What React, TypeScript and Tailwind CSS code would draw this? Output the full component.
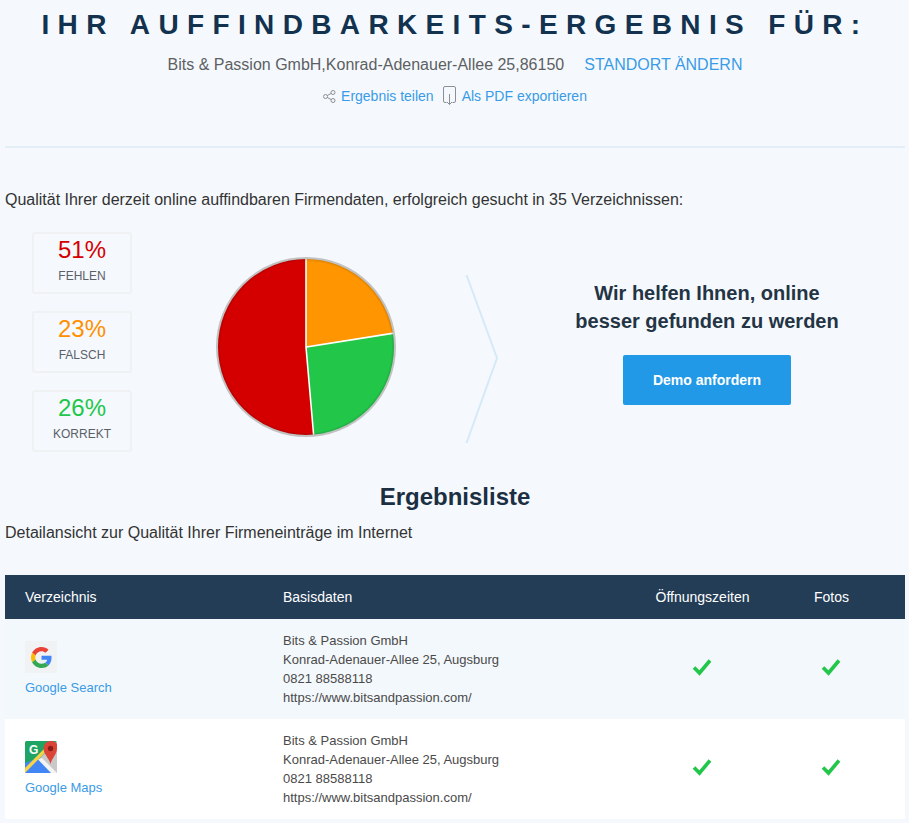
import React from "react";

const font = { fontFamily: '"Liberation Sans", Arial, sans-serif' };

function Check() {
  return (
    <svg width="20" height="18" viewBox="0 0 20 18" className="block -translate-x-px">
      <path d="M2 9.5 L7.5 15 L18 2.5" fill="none" stroke="#22c74a" strokeWidth="3.6" strokeLinejoin="miter" />
    </svg>
  );
}

function GoogleIcon() {
  return (
    <div className="w-8 h-8 bg-[#f1f2f3] flex items-center justify-center">
      <svg width="21" height="21" viewBox="0 0 48 48">
        <path fill="#EA4335" d="M24 9.5c3.54 0 6.71 1.22 9.21 3.6l6.85-6.85C35.9 2.38 30.47 0 24 0 14.62 0 6.51 5.38 2.56 13.22l7.98 6.19C12.43 13.72 17.74 9.5 24 9.5z" />
        <path fill="#4285F4" d="M46.98 24.55c0-1.57-.15-3.09-.38-4.55H24v9.02h12.94c-.58 2.96-2.26 5.48-4.78 7.18l7.73 6c4.51-4.18 7.09-10.36 7.09-17.65z" />
        <path fill="#FBBC05" d="M10.53 28.59c-.48-1.45-.76-2.99-.76-4.59s.27-3.14.76-4.59l-7.98-6.19C.92 16.46 0 20.12 0 24c0 3.88.92 7.54 2.56 10.78l7.97-6.19z" />
        <path fill="#34A853" d="M24 48c6.48 0 11.93-2.13 15.89-5.81l-7.73-6c-2.15 1.45-4.92 2.3-8.16 2.3-6.26 0-11.57-4.22-13.47-9.91l-7.98 6.19C6.51 42.62 14.62 48 24 48z" />
      </svg>
    </div>
  );
}

function MapsIcon() {
  return (
    <svg width="32" height="32" viewBox="0 0 32 32" className="block">
      <rect width="32" height="32" rx="1.5" fill="#1fa463" />
      <path d="M0 32 L32 0 V32 Z" fill="#c9c9c9" />
      <path d="M0 32 V22 L13 17 L28 32 Z" fill="#4285f4" />
      <path d="M17 17 L32 32 H26 L13 18.5 Z" fill="#f4f4f4" />
      <path d="M0 27 L23 4 L23 8.5 L0 32 Z" fill="#f8d348" />
      <path d="M26 0 C21.5 0 18.5 3.5 18.5 7.5 C18.5 13 24 17 25.5 23 C27 17 32 13 32 7.5 V3 C31 1 28.5 0 26 0 Z" fill="#db4437" />
      <circle cx="25.5" cy="7.5" r="2.7" fill="#8a1e16" />
      <text x="4" y="13" fontSize="12" fontWeight="700" fill="#fff" style={font}>G</text>
    </svg>
  );
}

function Stat({ value, label, color }: { value: string; label: string; color: string }) {
  return (
    <div className="w-[100px] h-[62px] border-2 border-[#eff1f3] rounded-[3px] flex flex-col items-center">
      <div className={`text-2xl leading-7 mt-[2px] ${color}`}>{value}</div>
      <div className="text-xs leading-4 mt-[4px] text-[#5b6068]">{label}</div>
    </div>
  );
}

function Row({ name, icon, white }: { name: string; icon: React.ReactNode; white?: boolean }) {
  return (
    <div className={`grid grid-cols-[258px_1fr_129px_129px] pr-[9px] h-[100px] ${white ? "bg-white" : "bg-[#f3f8fc]"}`}>
      <div className="pl-5 pt-[22px]">
        {icon}
        <div className="mt-[7px] text-[13px] leading-[16px] text-[#3a9be6]">{name}</div>
      </div>
      <div className="pl-5 pt-[12px] text-[13px] leading-[19px] text-[#4a4a4a]">
        <div>Bits &amp; Passion GmbH</div>
        <div>Konrad-Adenauer-Allee 25, Augsburg</div>
        <div>0821 88588118</div>
        <div>https://www.bitsandpassion.com/</div>
      </div>
      <div className="flex justify-center pt-[39px]"><Check /></div>
      <div className="flex justify-center pt-[39px]"><Check /></div>
    </div>
  );
}

export default function App() {
  return (
    <div style={font} className="w-[909px] h-[823px] overflow-hidden bg-[#f5f9fd]">
      <div className="w-[900px] ml-[5px]">
        <h1 className="pt-[9px] text-center text-[28px] leading-8 font-bold tracking-[8.36px] text-[#12324f]">
          IHR AUFFINDBARKEITS-ERGEBNIS FÜR:
        </h1>
        <div className="mt-[12px] flex justify-center gap-5 text-base leading-6">
          <span className="text-[#5d5f63]">Bits &amp; Passion GmbH,Konrad-Adenauer-Allee 25,86150</span>
          <span className="text-[#3a9be6]">STANDORT ÄNDERN</span>
        </div>
        <div className="mt-[9px] flex justify-center items-center text-sm leading-5 text-[#3a9be6]">
          <svg width="13" height="13" viewBox="0 0 13 13" fill="none" stroke="#8a9096" strokeWidth="1" className="mr-[5px]">
            <circle cx="2.5" cy="6.5" r="2" />
            <circle cx="10" cy="2.5" r="2" />
            <circle cx="10" cy="10.5" r="2" />
            <path d="M4.3 5.5 L8.2 3.4 M4.3 7.5 L8.2 9.6" />
          </svg>
          <span>Ergebnis teilen</span>
          <svg width="13" height="20" viewBox="0 0 13 20" fill="none" stroke="#8a9096" strokeWidth="1" className="ml-[9px] mr-[6px]">
            <path d="M3.5 16.5 H2 A1.5 1.5 0 0 1 0.5 15 V2 A1.5 1.5 0 0 1 2 0.5 H11 A1.5 1.5 0 0 1 12.5 2 V15 A1.5 1.5 0 0 1 11 16.5 H9.5" />
            <path d="M6.5 8 V18.5 M4 16 L6.5 18.5 L9 16" />
          </svg>
          <span>Als PDF exportieren</span>
        </div>
        <div className="mt-[40px] h-[2px] bg-[#e4eef7]" />

        <p className="mt-[42px] text-base leading-5 tracking-[-0.01px] text-[#333]">
          Qualität Ihrer derzeit online auffindbaren Firmendaten, erfolgreich gesucht in 35 Verzeichnissen:
        </p>

        <div className="mt-[22px] flex items-start h-[220px]">
          <div className="ml-[27px] flex flex-col gap-[17px]">
            <Stat value="51%" label="FEHLEN" color="text-[#d40000]" />
            <Stat value="23%" label="FALSCH" color="text-[#ff9000]" />
            <Stat value="26%" label="KORREKT" color="text-[#22c74a]" />
          </div>
          <svg width="182" height="182" viewBox="-91 -91 182 182" className="ml-[83px] mt-[24px]">
            <defs>
              <radialGradient id="edge" cx="50%" cy="50%" r="50%">
                <stop offset="96%" stopColor="#000" stopOpacity="0" />
                <stop offset="100%" stopColor="#000" stopOpacity="0.2" />
              </radialGradient>
            </defs>
            <circle r="89" fill="#d40000" />
            <path d="M0 0 L0 -89 A89 89 0 0 1 87.9 -13.9 Z" fill="#ff9500" />
            <path d="M0 0 L87.9 -13.9 A89 89 0 0 1 7.7 88.7 Z" fill="#22c74a" />
            <path d="M0 -89 L0 0 L87.9 -13.9 M0 0 L7.7 88.7" fill="none" stroke="#fff" strokeWidth="1.6" />
            <circle r="89" fill="url(#edge)" />
            <circle r="89" fill="none" stroke="#c2c2c2" strokeWidth="2" />
          </svg>
          <svg width="34" height="172" viewBox="0 0 34 172" fill="none" stroke="#d5e9f8" strokeWidth="2" className="ml-[68px] mt-[41px]">
            <path d="M1.5 2 L32 85 L1.5 170" />
          </svg>
          <div className="ml-[58px] w-[300px] mt-[47px] flex flex-col items-center">
            <div className="text-xl leading-7 font-bold text-[#243444] text-center">
              Wir helfen Ihnen, online<br />besser gefunden zu werden
            </div>
            <button className="mt-[20px] w-[168px] h-[50px] bg-[#2299e6] rounded-[2px] text-sm font-bold text-white">
              Demo anfordern
            </button>
          </div>
        </div>

        <h2 className="mt-[31px] text-center text-2xl leading-7 font-bold text-[#1c2f42]">Ergebnisliste</h2>
        <p className="mt-[12px] text-base leading-5 text-[#333]">Detailansicht zur Qualität Ihrer Firmeneinträge im Internet</p>

        <div className="mt-[32px] grid grid-cols-[258px_1fr_129px_129px] pr-[9px] h-[44px] items-center bg-[#233d56] text-sm text-white">
          <div className="pl-5">Verzeichnis</div>
          <div className="pl-5">Basisdaten</div>
          <div className="text-center">Öffnungszeiten</div>
          <div className="text-center">Fotos</div>
        </div>
        <Row name="Google Search" icon={<GoogleIcon />} />
        <Row name="Google Maps" icon={<MapsIcon />} white />
      </div>
    </div>
  );
}
